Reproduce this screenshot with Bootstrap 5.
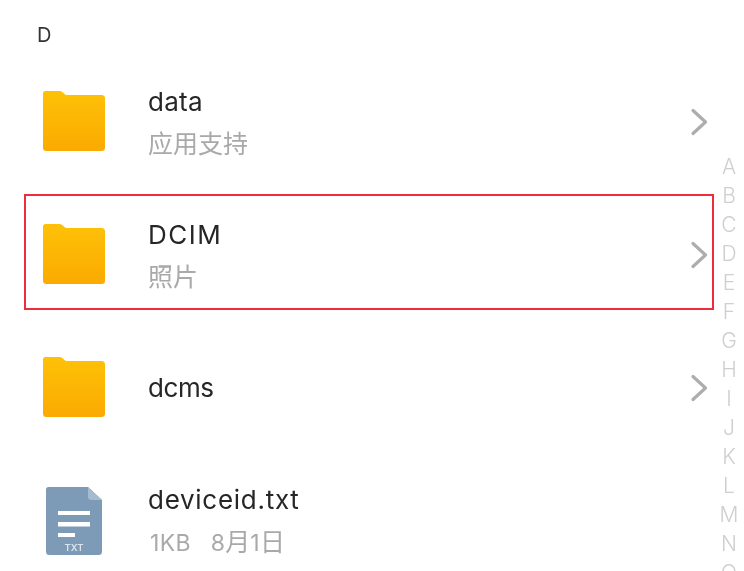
<!DOCTYPE html>
<html lang="zh">
<head>
<meta charset="utf-8">
<title>D</title>
<link href="https://cdn.jsdelivr.net/npm/bootstrap@5.3.0/dist/css/bootstrap.min.css" rel="stylesheet">
<style>
html,body{height:571px;overflow:hidden;background:#fff}
body{font-family:Inter,"Noto Sans CJK SC",sans-serif;color:#262626}
.pane{height:571px;overflow:hidden;filter:blur(.45px)}
.sect-head{height:55px;padding:25px 0 0 37px;font-size:20px;line-height:20px;color:#333}
.file-row{height:133px;padding-left:42px;padding-right:36px}
.file-ico{width:64px;margin-right:42px;margin-bottom:2px}
.file-ico-doc{margin-bottom:0}
.file-name{font-size:26px;line-height:30px;color:#262626;letter-spacing:.3px}
.name-wide{letter-spacing:1.5px}
.name-wider{letter-spacing:.72px}
.name-tight{letter-spacing:-.4px}
.file-meta{font-size:25px;line-height:28px;color:#a9a9a9;margin-top:13px}
.file-meta-num{font-size:23px;letter-spacing:.3px}
.meta-start{margin-left:2px}
.meta-gap{margin-left:20px}
.file-text{padding-top:1px}
.sel-box{left:24px;right:30px;top:5.5px;bottom:11px;border:2px solid #ee2c3c}
.alpha{position:absolute;right:0;top:152px;width:30px;font-size:21px;font-weight:300;line-height:29px;color:#cfcfcf;text-align:center}
.one-line{margin-top:1px}
</style>
</head>
<body>
<div class="pane position-relative">
  <div class="sect-head">D</div>

  <div class="file-row d-flex align-items-center">
    <svg class="file-ico flex-shrink-0" viewBox="0 0 64 62" height="62"><use href="#folder"/></svg>
    <div class="flex-grow-1 file-text">
      <div class="file-name">data</div>
      <div class="file-meta">应用支持</div>
    </div>
    <svg width="18" height="28" viewBox="0 0 18 28" class="flex-shrink-0"><path d="M3 2.500 15.500 14 3 25.500" fill="none" stroke="#adadad" stroke-width="3.200" stroke-linecap="round" stroke-linejoin="round"/></svg>
  </div>

  <div class="file-row d-flex align-items-center position-relative">
    <div class="sel-box position-absolute"></div>
    <svg class="file-ico flex-shrink-0" viewBox="0 0 64 62" height="62"><use href="#folder"/></svg>
    <div class="flex-grow-1 file-text">
      <div class="file-name name-wide">DCIM</div>
      <div class="file-meta">照片</div>
    </div>
    <svg width="18" height="28" viewBox="0 0 18 28" class="flex-shrink-0"><path d="M3 2.500 15.500 14 3 25.500" fill="none" stroke="#adadad" stroke-width="3.200" stroke-linecap="round" stroke-linejoin="round"/></svg>
  </div>

  <div class="file-row d-flex align-items-center">
    <svg class="file-ico flex-shrink-0" viewBox="0 0 64 62" height="62"><use href="#folder"/></svg>
    <div class="flex-grow-1 one-line">
      <div class="file-name name-tight">dcms</div>
    </div>
    <svg width="18" height="28" viewBox="0 0 18 28" class="flex-shrink-0"><path d="M3 2.500 15.500 14 3 25.500" fill="none" stroke="#adadad" stroke-width="3.200" stroke-linecap="round" stroke-linejoin="round"/></svg>
  </div>

  <div class="file-row d-flex align-items-center">
    <svg class="file-ico file-ico-doc flex-shrink-0" viewBox="0 0 64 70" height="70">
      <path d="M6.500 1H46L60 14V65.500a3.500 3.500 0 0 1-3.500 3.500H7.500A3.500 3.500 0 0 1 4 65.500V3.500A2.500 2.500 0 0 1 6.500 1Z" fill="#7d9ab6"/>
      <path d="M46 1 60 14H49.500a3.500 3.500 0 0 1-3.500-3.500Z" fill="#a5bbd0"/>
      <path d="M16 25H48V29H16ZM16 36H48V40.500H16ZM16 47H33V51H16Z" fill="#fff"/>
      <text x="32" y="64.500" font-family="Inter,sans-serif" font-size="9.500" font-weight="600" text-anchor="middle" fill="#dbe4ed">TXT</text>
    </svg>
    <div class="flex-grow-1 file-text">
      <div class="file-name name-wider">deviceid.txt</div>
      <div class="file-meta"><span class="file-meta-num meta-start">1KB</span><span class="file-meta-num meta-gap">8</span>月<span class="file-meta-num">1</span>日</div>
    </div>
  </div>

  <div class="alpha">
    <div>A</div><div>B</div><div>C</div><div>D</div><div>E</div><div>F</div><div>G</div><div>H</div><div>I</div><div>J</div><div>K</div><div>L</div><div>M</div><div>N</div><div>O</div>
  </div>
</div>

<svg width="0" height="0" style="position:absolute">
  <defs>
    <linearGradient id="fg" x1="0" y1="0" x2="0" y2="1"><stop offset="0" stop-color="#fec107"/><stop offset="1" stop-color="#fbaa01"/></linearGradient>
    <symbol id="folder" viewBox="0 0 64 62">
      <path d="M3.500 1H17.500C19.500 1 20.500 2 22 3.500C23 4.500 24 5 25.500 5H59.500A3.500 3.500 0 0 1 63 8.500V57.500A3.500 3.500 0 0 1 59.500 61H4.500A3.500 3.500 0 0 1 1 57.500V3.500A2.500 2.500 0 0 1 3.500 1Z" fill="url(#fg)"/>
    </symbol>
  </defs>
</svg>
<script src="https://cdn.jsdelivr.net/npm/bootstrap@5.3.0/dist/js/bootstrap.bundle.min.js"></script>
</body>
</html>
